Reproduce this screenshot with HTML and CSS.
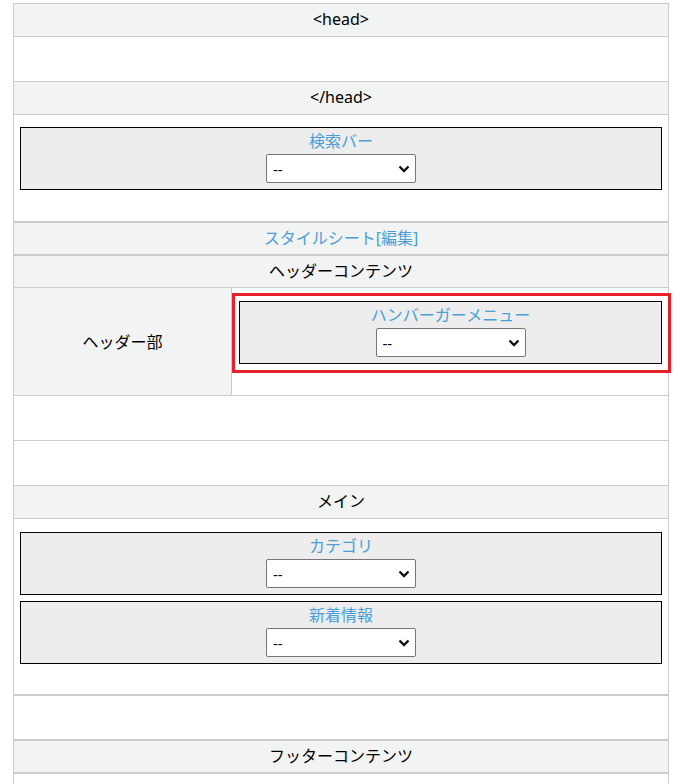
FILE: index.html
```html
<!DOCTYPE html>
<html lang="ja">
<head>
    <meta charset="UTF-8">
    <meta name="viewport" content="width=device-width, initial-scale=1.0">
    <title>レイアウト編集</title>
    <link rel="stylesheet" href="styles.css">
</head>
<body>
    <div class="page">
        <div class="section">
            <div class="row head">&lt;head&gt;</div>
            <div class="row blank"></div>
            <div class="row head">&lt;/head&gt;</div>
            <div class="row area">
                <div class="block">
                    <a class="block-title" href="#">検索バー</a>
                    <div class="picker">
                        <select><option>--</option></select>
                        <svg class="chevron" width="12" height="8" viewBox="0 0 12 8"><path d="M1.5 1.5 6 6 10.5 1.5" fill="none" stroke="#111" stroke-width="2.4"/></svg>
                    </div>
                </div>
            </div>
        </div>

        <div class="section">
            <div class="row head short"><a class="link" href="#">スタイルシート[編集]</a></div>
        </div>

        <div class="section">
            <div class="row head short">ヘッダーコンテンツ</div>
            <div class="row split">
                <div class="split-label">ヘッダー部</div>
                <div class="split-body">
                    <div class="block marked">
                        <a class="block-title" href="#">ハンバーガーメニュー</a>
                        <div class="picker">
                            <select><option>--</option></select>
                            <svg class="chevron" width="12" height="8" viewBox="0 0 12 8"><path d="M1.5 1.5 6 6 10.5 1.5" fill="none" stroke="#111" stroke-width="2.4"/></svg>
                        </div>
                    </div>
                </div>
            </div>
            <div class="row blank"></div>
            <div class="row blank"></div>
            <div class="row head">メイン</div>
            <div class="row area main">
                <div class="block">
                    <a class="block-title" href="#">カテゴリ</a>
                    <div class="picker">
                        <select><option>--</option></select>
                        <svg class="chevron" width="12" height="8" viewBox="0 0 12 8"><path d="M1.5 1.5 6 6 10.5 1.5" fill="none" stroke="#111" stroke-width="2.4"/></svg>
                    </div>
                </div>
                <div class="block">
                    <a class="block-title" href="#">新着情報</a>
                    <div class="picker">
                        <select><option>--</option></select>
                        <svg class="chevron" width="12" height="8" viewBox="0 0 12 8"><path d="M1.5 1.5 6 6 10.5 1.5" fill="none" stroke="#111" stroke-width="2.4"/></svg>
                    </div>
                </div>
            </div>
        </div>

        <div class="section">
            <div class="row blank thin"></div>
        </div>

        <div class="section">
            <div class="row head short">フッターコンテンツ</div>
        </div>

        <div class="section">
            <div class="row blank"></div>
        </div>
    </div>
</body>
</html>
```

FILE: styles.css
```css
body {
    margin: 0;
    font-family: "Noto Sans", "Noto Sans CJK JP", sans-serif;
    font-size: 16px;
    color: #000;
    background-color: #fff;
}
.page {
    width: 656px;
    margin: 3px 0 0 13px;
}
.section {
    border: 1px solid #ccc;
}
.row + .row {
    border-top: 1px solid #ccc;
}
.head {
    height: 32px;
    line-height: 30px;
    text-align: center;
    background-color: #f2f3f3;
}
.head.short {
    height: 31px;
    line-height: 30px;
}
.blank {
    height: 44px;
}
.blank.thin {
    height: 43px;
}
.link,
.block-title {
    color: #4a9fd8;
    text-decoration: none;
}
.area {
    padding: 12px 6px 31px;
}
.area.main {
    padding-top: 13px;
    padding-bottom: 30px;
}
.area.main .block + .block {
    margin-top: 6px;
}
.split {
    display: flex;
    height: 107px;
}
.split-label {
    width: 217px;
    border-right: 1px solid #ccc;
    background-color: #f2f3f3;
    display: flex;
    align-items: center;
    justify-content: center;
    padding-bottom: 2px;
}
.split-body {
    flex: 1;
    padding: 13px 6px 31px 7px;
}
.block {
    position: relative;
    border: 1px solid #000;
    background-color: #ededed;
    padding: 2px 0 6px;
    text-align: center;
}
.block-title {
    display: block;
    line-height: 23px;
    padding-bottom: 1px;
}
.picker {
    position: relative;
    width: 150px;
    height: 29px;
    margin: 0 auto;
}
.picker select {
    appearance: none;
    -webkit-appearance: none;
    display: block;
    width: 100%;
    height: 100%;
    padding: 0 0 0 6px;
    font-family: "Noto Sans", sans-serif;
    font-size: 15px;
    color: #000;
    background-color: #fff;
    border: 1px solid #767676;
    border-radius: 2px;
}
.chevron {
    position: absolute;
    right: 6px;
    top: 11px;
    pointer-events: none;
}
/* selected block highlight */
.block.marked::after {
    content: "";
    position: absolute;
    left: -8px;
    top: -9px;
    right: -10px;
    bottom: -10px;
    border: 3px solid #e8202a;
    pointer-events: none;
}
```
